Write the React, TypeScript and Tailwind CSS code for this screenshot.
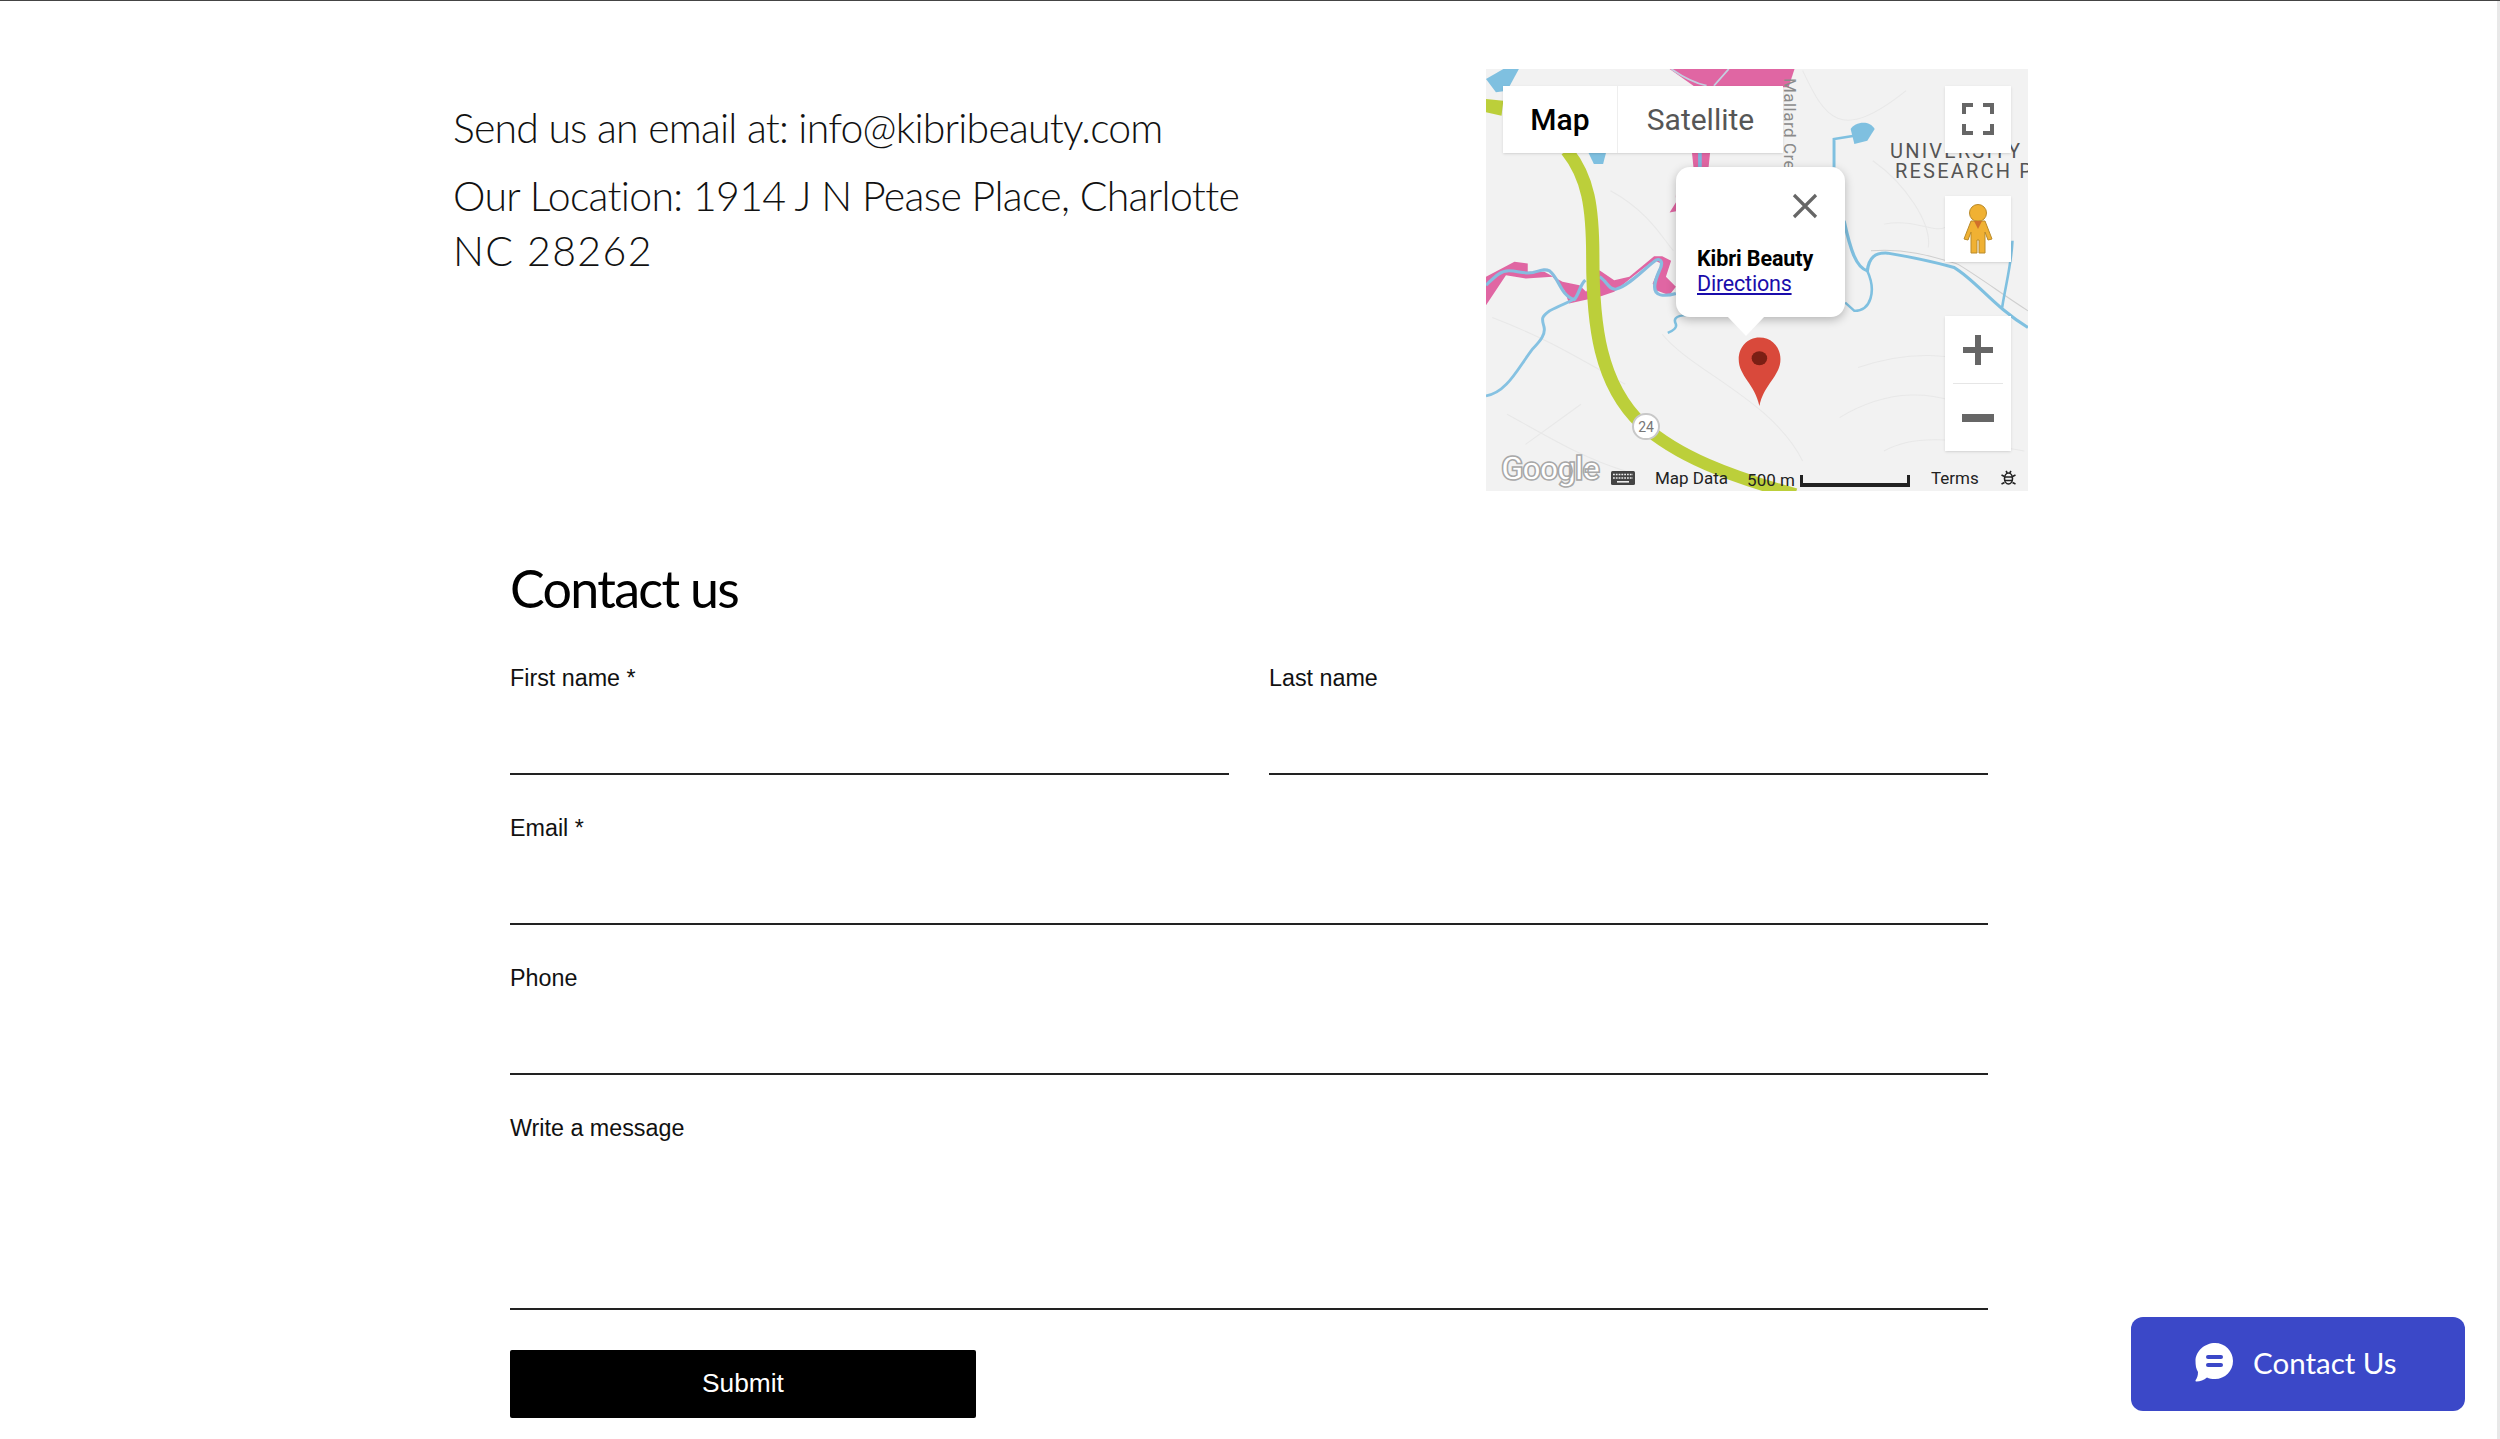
import React from "react";

const roboto = "font-['Roboto','Liberation_Sans',sans-serif]";

function MapArt() {
  return (
    <svg className="absolute inset-0 h-full w-full" viewBox="43 55 1467 1265" preserveAspectRatio="none">
      <rect x="43" y="55" width="1467" height="1265" fill="#f2f2f2" />
      <g fill="none" stroke="#e8e8e8" strokeWidth="3">
        <path d="M900 60C960 200 1000 280 1180 120M1090 330C1180 400 1250 520 1240 590M60 800C200 860 260 900 420 1000M520 850C600 960 820 1050 900 1230M1000 1100C1120 1020 1260 1000 1400 1100M100 1090C200 1150 300 1220 420 1260M1120 1200C1200 1150 1300 1160 1500 1200" />
        <path d="M380 420C480 480 520 560 550 600M1120 520C1220 500 1260 560 1300 520M1050 950C1180 900 1300 900 1450 960M150 1180L300 1060" />
      </g>
      <path d="M1085 600C1180 590 1260 620 1320 640C1380 680 1440 730 1510 780" fill="none" stroke="#cfcfcf" strokeWidth="3" />
      <path d="M540 55H878L862 110H610Z" fill="#e066a3" />
      <path d="M545 55C590 90 620 100 640 105M700 55L660 105" fill="none" stroke="#c4cfe0" strokeWidth="5" />
      <path d="M600 300H650L645 355H605Z" fill="#e066a3" />
      <path d="M622 300V350" stroke="#7fb5dc" strokeWidth="10" />
      <path d="M555 430L560 450L540 485L565 480Z" fill="#e066a3" />
      <path d="M43 678L120 633L156 638V663H201L250 693L296 703L314 723L350 658L390 688L431 678L498 616H520L544 630L530 678L557 708L539 733L503 718L494 698L517 638L498 628L440 678L390 723L350 738L268 758L255 718L223 678L151 683L97 673L43 763Z" fill="#e066a3" />
      <path d="M43 703C65 680 80 660 105 660C130 660 145 670 170 665C190 660 200 652 215 660C240 680 245 735 282 746C295 730 298 700 312 688M350 678C370 690 375 718 395 715C430 705 475 650 503 628C520 620 522 640 512 660C500 690 490 725 515 732C530 736 545 732 557 728" fill="none" stroke="#86bddf" strokeWidth="9" />
      <path d="M43 1035C100 1025 130 950 170 893C190 870 205 850 200 828C195 805 190 800 215 780C240 765 265 755 282 745" fill="none" stroke="#86c2e2" strokeWidth="8" />
      <path d="M535 846C550 840 560 830 557 820C550 805 555 795 585 793" fill="none" stroke="#7fc0e0" strokeWidth="7" />
      <path d="M1012 510C1030 600 1045 650 1075 660C1080 620 1095 605 1130 607C1200 620 1260 635 1310 650C1370 690 1420 770 1510 830" fill="none" stroke="#7fc0e0" strokeWidth="9" />
      <path d="M1075 660C1100 720 1085 780 1040 780L1015 755M1440 770C1450 700 1465 640 1468 570" fill="none" stroke="#7fc0e0" strokeWidth="7" />
      <path d="M985 350V265L1040 255" fill="none" stroke="#7fc0e0" strokeWidth="8" />
      <path d="M1030 235C1040 215 1080 205 1095 235L1075 270L1040 280Z" fill="#7fc0e0" />
      <path d="M43 85L90 55H132L100 120L70 125Z" fill="#7fc0e0" />
      <path d="M320 305H368L360 340L335 340Z" fill="#7fc0e0" />
      <path d="M43 145L90 150L85 195L43 185Z" fill="#bccf3a" />
      <path d="M262 300C320 380 332 470 332 620C332 820 350 1000 465 1120C560 1215 700 1275 880 1330" fill="none" stroke="#bccf3a" strokeWidth="36" />
      <path d="M727 925C727 890 750 860 783 860C818 860 840 890 840 925C840 975 795 1000 783 1065C771 1000 727 975 727 925Z" fill="#d9493b" />
      <ellipse cx="783" cy="922" rx="21" ry="21" fill="#7b1f14" />
    </svg>
  );
}

function Label({ className, children }: { className: string; children: React.ReactNode }) {
  return <span className={`absolute whitespace-nowrap ${roboto} ${className}`}>{children}</span>;
}

function MapPanel() {
  const caption = `whitespace-nowrap text-[17px] leading-[20px] text-[#222] ${roboto}`;
  return (
    <div className="relative h-[422px] w-[542px] shrink-0 overflow-hidden">
      <MapArt />

      <Label className="left-[404px] top-[72px] text-[20px] leading-[20px] tracking-[2.2px] text-[#555]">UNIVERSITY</Label>
      <Label className="left-[409px] top-[92px] text-[20px] leading-[20px] tracking-[2.2px] text-[#555]">RESEARCH P</Label>
      <Label className="left-[258px] top-[45px] origin-center rotate-90 text-[17px] leading-[20px] tracking-[0.5px] text-[#8a8a8a]">Mallard Cre</Label>

      <div className="absolute left-[17px] top-[17px] flex h-[67px] w-[280px] bg-white shadow-sm">
        <div className={`flex w-[115px] items-center justify-center border-r border-[#eee] text-[30px] font-medium text-black ${roboto}`}>Map</div>
        <div className={`flex flex-1 items-center justify-center text-[30px] text-[#565656] ${roboto}`}>Satellite</div>
      </div>

      <div className="absolute right-[17px] top-[17px] flex w-[66px] flex-col">
        <div className="flex h-[67px] items-center justify-center bg-white pb-[2px] shadow-sm">
          <svg width="32" height="32" viewBox="0 0 32 32" fill="none" stroke="#666" strokeWidth="4">
            <path d="M2 11V2H11M21 2H30V11M30 21V30H21M11 30H2V21" />
          </svg>
        </div>
        <div className="mt-[43px] flex h-[66px] items-center justify-center bg-white shadow-sm">
          <svg width="30" height="50" viewBox="0 0 30 50">
            <circle cx="15" cy="9" r="8.5" fill="#f0b133" stroke="#b98a2a" />
            <path d="M8 17H22L29 35L25 36L22 28V49H16V36H14V49H8V28L5 36L1 35Z" fill="#f0b133" stroke="#b98a2a" />
            <path d="M11 17H19L15 25Z" fill="#d0702a" />
          </svg>
        </div>
        <div className="mt-[54px] flex h-[135px] flex-col items-center bg-white shadow-sm">
          <div className="flex h-[67px] w-full items-center justify-center">
            <svg width="32" height="32" viewBox="0 0 32 32"><path d="M13 1H19V13H31V19H19V31H13V19H1V13H13Z" fill="#666" /></svg>
          </div>
          <div className="h-px w-[50px] bg-[#e6e6e6]" />
          <div className="flex h-[67px] w-full items-center justify-center">
            <svg width="32" height="8" viewBox="0 0 32 8"><rect width="32" height="8" fill="#666" /></svg>
          </div>
        </div>
      </div>

      <div className="absolute left-[190px] top-[98px] flex h-[150px] w-[169px] flex-col rounded-[14px] bg-white pl-[21px] pt-[80px] shadow-[0_3px_10px_rgba(0,0,0,0.25)]">
        <svg className="absolute left-[51px] top-[149px]" width="38" height="20" viewBox="0 0 38 20"><path d="M0 0H38L19 20Z" fill="#fff" /></svg>
        <svg className="absolute left-[116px] top-[26px]" width="26" height="26" viewBox="0 0 26 26" stroke="#666" strokeWidth="3.2"><path d="M2 2L24 24M24 2L2 24" /></svg>
        <div className={`whitespace-nowrap text-[21.5px] font-bold leading-[24px] tracking-[-0.1px] text-black ${roboto}`}>Kibri Beauty</div>
        <div className={`mt-px whitespace-nowrap text-[21.5px] leading-[24px] tracking-[-0.2px] text-[#1a0dab] underline ${roboto}`}>Directions</div>
      </div>

      <div className="absolute left-[146px] top-[344px] flex h-[27px] w-[28px] items-center justify-center rounded-full border-2 border-[#c8c8c8] bg-white">
        <span className={`text-[14px] leading-none text-[#777] ${roboto}`}>24</span>
      </div>

      <div className="absolute bottom-0 left-[15px] flex h-[44px] items-center">
        <span className={`w-[110px] whitespace-nowrap text-[33px] font-bold leading-[44px] tracking-[-1.2px] text-white [-webkit-text-stroke:1.5px_#a8a8a8] ${roboto}`}>Google</span>
        <svg className="mt-[18px]" width="24" height="14" viewBox="0 0 24 14">
          <rect width="24" height="14" rx="1.5" fill="#444" />
          <path d="M2 3.500H22M2 7H22" stroke="#eee" strokeWidth="1.6" strokeDasharray="1.800 1" />
          <path d="M6 10.800H18" stroke="#eee" strokeWidth="1.600" />
        </svg>
        <span className={`ml-[20px] mt-[18px] ${caption}`}>Map Data</span>
        <span className={`ml-[19px] mt-[22px] ${caption}`}>500 m</span>
        <div className="ml-[5px] mt-[24px] h-[12px] w-[110px] border-x-[3px] border-b-[4px] border-[#222]" />
        <span className={`ml-[21px] mt-[18px] ${caption}`}>Terms</span>
        <svg className="ml-[22px] mt-[18px]" width="15" height="16" viewBox="0 0 15 16" fill="none" stroke="#222" strokeWidth="1.600">
          <ellipse cx="7.500" cy="8.500" rx="4" ry="5.500" />
          <path d="M4 7H11M4 10.500H11M0.500 5L3.500 6.500M14.500 5L11.500 6.500M0.500 14L3.500 12.500M14.500 14L11.500 12.500M5 1L6.300 3M10 1L8.700 3" />
        </svg>
      </div>
    </div>
  );
}

function Field({ label, h = "h-[82px]", area = false }: { label: string; h?: string; area?: boolean }) {
  const cls = `block w-full border-0 border-b-2 border-[#222] bg-transparent outline-none resize-none ${h}`;
  return (
    <label className="block">
      <span className="block text-[23.3px] leading-[30px] text-[#111]">{label}</span>
      {area ? <textarea className={cls} /> : <input className={cls} />}
    </label>
  );
}

export default function App() {
  return (
    <div className="relative h-[1439px] w-full overflow-hidden border-t border-t-[#444] bg-white font-['Liberation_Sans',Arial,sans-serif]">
      <div className="absolute bottom-0 right-0 top-0 w-[3px] bg-[#e8e8e8]" />

      <section className="flex pl-[453px] pt-[68px]">
        <div className="w-[1033px] pt-[31px] font-['Lato','Open_Sans',sans-serif] text-[41px] font-light text-[#111]">
          <p className="leading-[55px] tracking-[-0.8px]">Send us an email at: info@kibribeauty.com</p>
          <p className="mt-[13px] leading-[55px] tracking-[-0.68px]">
            Our Location: 1914 J N Pease Place, Charlotte
            <br />
            <span className="tracking-[1.4px]">NC 28262</span>
          </p>
        </div>
        <MapPanel />
      </section>

      <form className="ml-[510px] mt-[67px] w-[1478px]">
        <h2 className="mb-[45px] font-['Lato','Open_Sans',sans-serif] text-[52px] font-normal leading-[60px] tracking-[-1.7px] text-black">Contact us</h2>
        <div className="grid grid-cols-2 gap-x-10 gap-y-[38px]">
          <Field label="First name *" />
          <Field label="Last name" />
          <div className="col-span-2"><Field label="Email *" /></div>
          <div className="col-span-2"><Field label="Phone" /></div>
          <div className="col-span-2"><Field label="Write a message" h="h-[167px]" area /></div>
        </div>
        <button type="button" className="mt-[40px] flex h-[68px] w-[466px] items-center justify-center rounded-[2px] bg-black text-[26.3px] text-white">
          Submit
        </button>
      </form>

      <button type="button" className="absolute bottom-[28px] right-[35px] flex h-[94px] w-[334px] items-center rounded-[12px] bg-[#3b48c8] pb-[3px] pl-[64px] text-white">
        <svg width="38" height="39" viewBox="0 0 38 39">
          <path d="M20 0C30 0 38 8 38 18C38 28 30 36 20 36C17 36 14 35.500 12 34.500C9 37 5 38.500 1.500 38.500C0.500 38.500 0.200 37.800 0.700 37C2 35 3 33 3 29C1 26 0.500 22 0.500 18C0.500 8 10 0 20 0Z" fill="#fff" />
          <rect x="11" y="12" width="17" height="4" rx="2" fill="#3b48c8" />
          <rect x="11" y="20" width="17" height="4" rx="2" fill="#3b48c8" />
        </svg>
        <span className="ml-[20px] font-['Lato','Open_Sans',sans-serif] text-[29.5px] leading-none">Contact Us</span>
      </button>
    </div>
  );
}
